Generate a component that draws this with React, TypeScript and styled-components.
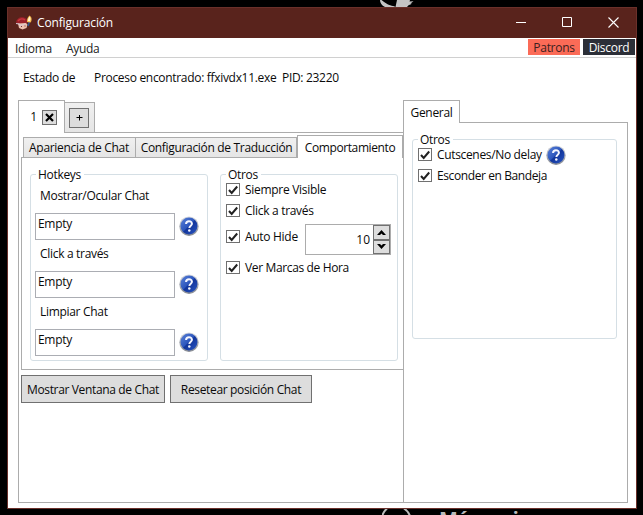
import React from "react";
import styled, { createGlobalStyle } from "styled-components";

const Global = createGlobalStyle`
  * { box-sizing: border-box; }
  html, body { margin: 0; background: #000; overflow: hidden; }
  body { font: 12px/16px "Open Sans", "Noto Sans", sans-serif; letter-spacing: -0.31px; color: #0a0a0a; }
  button, input { font: inherit; letter-spacing: inherit; color: inherit; }
`;

const Desktop = styled.div`
  position: relative; width: 643px; height: 515px; padding: 7px; background: #000; overflow: hidden;
`;
const Bird = styled.svg`position: absolute; left: 379px; top: 0;`;
const Behind = styled.div`
  position: absolute; left: 382px; top: 509px; width: 180px; color: #bbb;
`;
const Ring = styled.svg`position: absolute; left: 0; top: 0;`;
const BehindText = styled.div`
  position: absolute; left: 57px; top: -3px; font: bold 20px/26px "Noto Sans", sans-serif; letter-spacing: -1.1px; white-space: nowrap;
`;
const Window = styled.div`
  position: relative; width: 630px; height: 502px; border: 1px solid #6b302a; background: #fff;
  display: flex; flex-direction: column;
`;
const TitleBar = styled.header`
  height: 30px; flex: none; background: #59231c; color: #fff; display: flex; align-items: center; padding-left: 8px;
`;
const Title = styled.span`margin-left: 4px; letter-spacing: -0.15px;`;
const Controls = styled.div`margin-left: auto; display: flex;`;
const Control = styled.button`
  width: 46px; height: 30px; padding: 0 0 2px; border: 0; background: none; display: grid; place-items: center;
`;
const MenuBar = styled.nav`
  height: 20px; flex: none; display: flex; align-items: flex-start; border-bottom: 1px solid #d0d0d0; padding: 1px 1px 0 7px; color: #222;
`;
const MenuItem = styled.span<{ $w: number }>`
  width: ${p => p.$w}px; line-height: 19px;
`;
const LinkBadge = styled.button<{ $bg: string; $fg: string }>`
  width: 52px; height: 16px; margin-left: 3px; padding: 0; border: 0; line-height: 18px;
  background: ${p => p.$bg}; color: ${p => p.$fg}; letter-spacing: -0.3px;
`;
const Badges = styled.div`margin-left: auto; display: flex;`;
const Status = styled.div`
  height: 42px; flex: none; display: flex; padding: 12px 0 0 15px; white-space: pre;
`;
const StatusLabel = styled.span`width: 71px;`;
const Main = styled.main`display: flex; padding-left: 10px; height: 403px; flex: none;`;
const LeftPane = styled.section`width: 385px; display: flex; flex-direction: column;`;
const RightPane = styled.section`width: 225px; display: flex; flex-direction: column;`;
const Strip = styled.div<{ $h: number; $pad?: number }>`
  height: ${p => p.$h}px; flex: none; display: flex; align-items: flex-end; padding-left: ${p => p.$pad ?? 0}px;
`;
const Tab = styled.div<{ $w: number; $h: number; $active?: boolean; $joined?: boolean; $pl?: number; $pr?: number; $pt?: number; $ls?: number }>`
  width: ${p => p.$w}px; height: ${p => p.$h}px; flex: none;
  display: flex; align-items: center; justify-content: center; white-space: nowrap;
  padding: ${p => p.$pt ?? 0}px ${p => p.$pr ?? 0}px 0 ${p => p.$pl ?? 0}px;
  border: 1px solid #acacac; border-bottom: 0;
  ${p => p.$joined && "border-left: 0;"}
  background: ${p => (p.$active ? "#fff" : "linear-gradient(#f0f0f0, #e5e5e5)")};
  letter-spacing: ${p => p.$ls ?? -0.3}px;
  ${p => p.$active && "margin-bottom: -1px; z-index: 1;"}
`;
const OuterPanel = styled.div`
  flex: 1; border: 1px solid #acacac; border-right: 0; padding: 2px 0 0 2px;
`;
const InnerPanel = styled.div`
  height: 213px; border: 1px solid #acacac; border-right: 0; display: flex; padding: 8px 0 0 8px;
`;
const GeneralPanel = styled.div`flex: 1; border: 1px solid #acacac; padding: 8px 0 0 8px;`;
const Group = styled.fieldset<{ $w: number; $h: number; $gap?: number; $pl: number }>`
  width: ${p => p.$w}px; height: ${p => p.$h}px; min-width: 0; flex: none;
  margin: 0 ${p => p.$gap ?? 0}px 0 0; padding: 0 0 0 ${p => p.$pl}px;
  border: 1px solid #d5dfe5; border-radius: 3px;
`;
const Legend = styled.legend<{ $ml: number }>`
  margin-left: ${p => p.$ml}px; padding: 1px 3px 0 2px; height: 16px;
`;
const FieldLabel = styled.div`height: 31px; padding: 6px 0 0 5px;`;
const FieldRow = styled.div`height: 27px; display: flex; align-items: center;`;
const KeyField = styled.input`
  width: 140px; height: 27px; border: 1px solid #abadb3; padding: 0 2px 7px; background: #fff; outline: 0; margin-right: 4px;
`;
const CheckRow = styled.div<{ $h: number; $top?: number }>`
  display: flex; align-items: center; height: ${p => p.$h}px; margin-top: ${p => p.$top ?? 0}px; white-space: nowrap;
`;
const CheckText = styled.span<{ $ls?: number }>`padding-top: 1px; letter-spacing: ${p => p.$ls ?? -0.3}px;`;
const CheckBox = styled.span`
  width: 14px; height: 13px; flex: none; margin-right: 5px; border: 1px solid #707070; background: #fff; display: grid; place-items: center;
`;
const HelpSlot = styled.span`display: flex; margin-left: 4px; padding-top: 2px;`;
const Spinner = styled.div`
  width: 86px; height: 31px; border: 1px solid #acacac; display: flex; margin-left: auto; margin-right: 6px; margin-top: 6px;
`;
const SpinValue = styled.span`flex: 1; text-align: right; padding-right: 3px; line-height: 30px; letter-spacing: 0;`;
const SpinButtons = styled.div`width: 17px; display: flex; flex-direction: column;`;
const SpinButton = styled.button`
  height: 14.5px; flex: 1; padding: 0; border: 1px solid #707070; background: #ddd; display: grid; place-items: center;
`;
const Actions = styled.div`display: flex; gap: 5px; margin-top: 5px;`;
const Action = styled.button<{ $w: number; $ls: number }>`
  width: ${p => p.$w}px; height: 28px; padding: 2px 0 0; border: 1px solid #707070; background: #ddd; letter-spacing: ${p => p.$ls}px; white-space: nowrap;
`;
const TabButton = styled.button<{ $s: number }>`
  width: ${p => p.$s}px; height: ${p => p.$s}px; padding: 0; border: 1px solid #707070; background: #ddd; display: grid; place-items: center;
`;
const TabNumber = styled.span`margin-right: 5px;`;

const Help = () => (
  <svg width="20" height="21" viewBox="0 0 21 21">
    <defs>
      <linearGradient id="ball" x1="0" y1="0" x2="1" y2="1">
        <stop offset="0" stopColor="#5b82d8" />
        <stop offset=".48" stopColor="#2c56bd" />
        <stop offset=".52" stopColor="#12359a" />
        <stop offset="1" stopColor="#2a57c4" />
      </linearGradient>
      <linearGradient id="rim" x1="0" y1="0" x2="0" y2="1">
        <stop offset="0" stopColor="#d6d9df" />
        <stop offset="1" stopColor="#858991" />
      </linearGradient>
    </defs>
    <circle cx="10.5" cy="10.2" r="10.2" fill="url(#rim)" />
    <circle cx="10.5" cy="9.9" r="8.9" fill="url(#ball)" />
    <path d="M7.400 7.900C7.500 6 8.700 5.100 10.500 5.100s3.100 1 3.100 2.600c0 1.900-2.700 2.100-2.700 4.400" fill="none" stroke="#f4f6ff" strokeWidth="2.100" />
    <circle cx="10.800" cy="14.600" r="1.300" fill="#f4f6ff" />
  </svg>
);

type CheckProps = { label: string; h?: number; top?: number; ls?: number; children?: React.ReactNode };

const Check = ({ label, h = 15, top, ls, children }: CheckProps) => (
  <CheckRow $h={h} $top={top}>
    <CheckBox>
      <svg width="10" height="10" viewBox="0 0 10 10"><path d="M1 5l2.700 3L9.200 1.500" fill="none" stroke="#212121" strokeWidth="2" /></svg>
    </CheckBox>
    <CheckText $ls={ls}>{label}</CheckText>
    {children}
  </CheckRow>
);

const AppIcon = () => (
  <svg width="17" height="16" viewBox="0 0 17 16">
    <path d="M0 7.500C.5 3.500 4 1.500 8 2.500c2.500 .8 3.500 2.500 3.500 5L9 9 2 8.500z" fill="#9a2029" />
    <path d="M2 6C4 3.500 7 3.500 9 5" fill="none" stroke="#c9383f" strokeWidth="1.500" />
    <path d="M2 8.500l8-.5 1.500 1.500-1 3.500-4 1.500L3 13z" fill="#edc0ad" />
    <path d="M0 8.500l3 .5 1 1.500 5-1.500" fill="none" stroke="#d9c6cf" strokeWidth="1.200" />
    <path d="M5 11.500h1M8.500 11h1" stroke="#733139" />
    <path d="M12 11l1.300-4" stroke="#31578b" strokeWidth="1.600" />
    <path d="M11 7C10.500 4 12 2 13.500 0.500c2.500 1.500 2.700 5 1 7z" fill="#f4b84c" />
    <path d="M12 6C12 4 12.500 3 13.500 1.500c1.300 1.500 1.300 3 .3 4.800z" fill="#fff4cf" />
  </svg>
);

const hotkeys = ["Mostrar/Ocular Chat", "Click a través", "Limpiar Chat"];

export default function App() {
  return (
    <Desktop>
      <Global />
      <Bird width="36" height="8" viewBox="0 0 36 8">
        <path d="M1 0h1.500q6 5.500 14 6.500l-1.500.5H6Q1 4.500 1 0zM18 0h13l-.5 1.500 4-.3-3 2.300 1.500.3-3.500 1.500-1.500 1.700H16.500z" fill="#c4c4c4" />
      </Bird>
      <Behind>
        <Ring width="30" height="7"><path d="M0 7Q2 2 5 -.5M22 -.5Q26 2 28 7" stroke="#bbb" strokeWidth="2" fill="none" /></Ring>
        <BehindText>Más opciones</BehindText>
      </Behind>
      <Window>
        <TitleBar>
          <AppIcon />
          <Title>Configuración</Title>
          <Controls>
            <Control><svg width="10" height="10"><path d="M0 5.500h10" stroke="#fff" /></svg></Control>
            <Control><svg width="10" height="10"><path d="M.5.5h9v9h-9z" stroke="#fff" fill="none" /></svg></Control>
            <Control><svg width="11" height="11"><path d="M.5.5l10 10M10.500.5l-10 10" stroke="#fff" strokeWidth="1.100" /></svg></Control>
          </Controls>
        </TitleBar>
        <MenuBar>
          <MenuItem $w={51}>Idioma</MenuItem>
          <MenuItem $w={40}>Ayuda</MenuItem>
          <Badges>
            <LinkBadge $bg="#fb6b57" $fg="#3a2020">Patrons</LinkBadge>
            <LinkBadge $bg="#2c2f38" $fg="#fff">Discord</LinkBadge>
          </Badges>
        </MenuBar>
        <Status>
          <StatusLabel>Estado de</StatusLabel>
          <span>Proceso encontrado: ffxivdx11.exe  PID: 23220</span>
        </Status>
        <Main>
          <LeftPane>
            <Strip $h={32}>
              <Tab $w={47} $h={33} $active $pl={5} $pr={1}>
                <TabNumber>1</TabNumber>
                <TabButton $s={15}>
                  <svg width="9" height="9"><path d="M1 1l7 7M8 1L1 8" stroke="#000" strokeWidth="2.200" /></svg>
                </TabButton>
              </Tab>
              <Tab $w={30} $h={30} $joined $pr={1}>
                <TabButton $s={20}>
                  <svg width="7" height="7"><path d="M.5 3.500h6M3.500 1v5.500" stroke="#000" /></svg>
                </TabButton>
              </Tab>
            </Strip>
            <OuterPanel>
              <Strip $h={22} $pad={2}>
                <Tab $w={113} $h={20} $pt={1} $pr={1}>Apariencia de Chat</Tab>
                <Tab $w={161} $h={20} $pt={1} $pl={1} $joined $ls={-0.32}>Configuración de Traducción</Tab>
                <Tab $w={106} $h={23} $pt={1} $active $ls={-0.4}>Comportamiento</Tab>
              </Strip>
              <InnerPanel>
                <Group $w={178} $h={195} $gap={12} $pl={4}>
                  <Legend $ml={1}>Hotkeys</Legend>
                  {hotkeys.map(k => (
                    <React.Fragment key={k}>
                      <FieldLabel>{k}</FieldLabel>
                      <FieldRow><KeyField readOnly value="Empty" /><Help /></FieldRow>
                    </React.Fragment>
                  ))}
                </Group>
                <Group $w={178} $h={195} $pl={5}>
                  <Legend $ml={0}>Otros</Legend>
                  <Check label="Siempre Visible" />
                  <Check label="Click a través" top={6} />
                  <Check label="Auto Hide" h={31} top={3}>
                    <Spinner>
                      <SpinValue>10</SpinValue>
                      <SpinButtons>
                        <SpinButton><svg width="9" height="5"><path d="M0 5L4.500 0 9 5H6L4.500 3.500 3 5z" /></svg></SpinButton>
                        <SpinButton><svg width="9" height="5"><path d="M0 0l4.500 5L9 0H6L4.500 1.500 3 0z" /></svg></SpinButton>
                      </SpinButtons>
                    </Spinner>
                  </Check>
                  <Check label="Ver Marcas de Hora" top={8} ls={-0.36} />
                </Group>
              </InnerPanel>
              <Actions>
                <Action $w={144} $ls={-0.35}>Mostrar Ventana de Chat</Action>
                <Action $w={142} $ls={-0.35}>Resetear posición Chat</Action>
              </Actions>
            </OuterPanel>
          </LeftPane>
          <RightPane>
            <Strip $h={22}><Tab $w={57} $h={23} $pt={1} $active>General</Tab></Strip>
            <GeneralPanel>
              <Group $w={205} $h={208} $pl={5}>
                <Legend $ml={0}>Otros</Legend>
                <Check label="Cutscenes/No delay" ls={-0.34}><HelpSlot><Help /></HelpSlot></Check>
                <Check label="Esconder en Bandeja" top={6} ls={-0.4} />
              </Group>
            </GeneralPanel>
          </RightPane>
        </Main>
      </Window>
    </Desktop>
  );
}
